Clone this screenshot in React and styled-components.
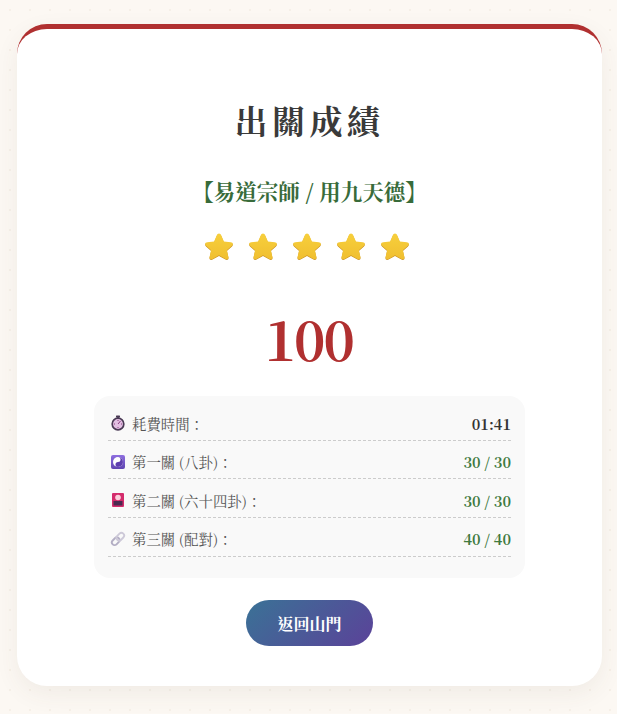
import React from "react";
import styled, { createGlobalStyle } from "styled-components";

const SERIF = `"Noto Serif CJK TC", "Noto Serif TC", "Liberation Serif", "Noto Sans CJK TC", serif`;

const Global = createGlobalStyle`
  html, body { margin: 0; padding: 0; }
  body {
    min-height: 714px;
    background-color: #fcf8f3;
    background-image: radial-gradient(#f6f0e8 1px, transparent 1px);
    background-size: 20px 20px;
    font-family: ${SERIF};
    overflow: hidden;
  }
`;

const Page = styled.div`
  padding: 24px 15px 28px 17px;
`;

const Card = styled.section`
  box-sizing: border-box;
  height: 662px;
  background: #fff;
  border-radius: 30px;
  border-top: 5px solid #b03030;
  box-shadow: 0 8px 24px rgba(90, 70, 50, 0.07);
  padding-top: 67px;
  display: flex;
  flex-direction: column;
  align-items: center;
`;

const Title = styled.h1`
  margin: 0;
  font-size: 33px;
  line-height: 48px;
  font-weight: 700;
  letter-spacing: 4.5px;
  color: #3a3a3a;
`;

const Rank = styled.h2`
  margin: 31px 0 0;
  font-size: 21.5px;
  line-height: 32px;
  font-weight: 700;
  color: #386b3a;
`;

const Stars = styled.div`
  margin: 24px 6px 0 0;
  display: flex;
  gap: 14px;
  height: 32px;
`;

const Score = styled.div`
  margin: 39px 2px 0 0;
  font-size: 54px;
  line-height: 72px;
  font-weight: 700;
  font-feature-settings: "pnum", "pwid";
  letter-spacing: -2.5px;
  color: #b03030;
`;

const Stats = styled.div`
  box-sizing: border-box;
  margin-top: 22px;
  width: 431px;
  height: 182px;
  padding: 6.300px 14px 0;
  background: #f9f9f9;
  border-radius: 16px;
`;

const Row = styled.div`
  height: 38.600px;
  box-sizing: border-box;
  padding-top: 4px;
  display: flex;
  align-items: center;
  justify-content: space-between;
  border-bottom: 1px dashed #ccc;
  font-size: 14.4px;
`;

const Label = styled.span`
  display: flex;
  align-items: center;
  gap: 6px;
  margin-left: 2px;
  color: #555;
`;

const Value = styled.span`
  font-size: 14.600px;
  font-weight: 700;
  font-feature-settings: "pnum", "pwid";
  color: ${(p) => (p.$ok ? "#3f7a3f" : "#333")};
`;

const Button = styled.button`
  margin-top: 22px;
  width: 127px;
  height: 46px;
  border: none;
  border-radius: 23px;
  background: linear-gradient(135deg, #3a7296, #5b4299);
  color: #fff;
  font-family: inherit;
  font-size: 16px;
  font-weight: 700;
`;

const STAR_PATH =
  "M15 2.500c1 0 1.700.7 2.200 1.800l2.700 6.300 6.800.7c2.200.2 2.900 2 1.300 3.400l-5.100 4.500 1.500 6.700c.5 2-1.200 3-3 2l-6.400-3.600-6.400 3.600c-1.800 1-3.500 0-3-2l1.500-6.700-5.100-4.500c-1.600-1.400-.9-3.200 1.300-3.400l6.800-.7 2.700-6.300C13.300 3.200 14 2.500 15 2.500z";

const Star = () => (
  <svg width="30" height="30" viewBox="0 0 30 30">
    <defs>
      <linearGradient id="st" x1="0" y1="0" x2="0" y2="1">
        <stop offset="0" stopColor="#f7cf3c" />
        <stop offset="1" stopColor="#f0bf30" />
      </linearGradient>
    </defs>
    <path d={STAR_PATH} fill="#c98f1e" transform="translate(0 .7)" />
    <path d={STAR_PATH} fill="url(#st)" />
  </svg>
);

const Timer = () => (
  <svg width="16" height="16" viewBox="0 0 16 16">
    <rect x="6" y="0.500" width="4" height="2" rx="0.6" fill="#4a3a55" />
    <rect x="7.200" y="2" width="1.600" height="2" fill="#4a3a55" />
    <circle cx="8" cy="9" r="5.800" fill="#e2bfe2" stroke="#4a3a55" strokeWidth="1.700" />
    <path d="M8 9L10.500 6M8 5v1M8 12v1M4 9h1M11 9h1" stroke="#8a3a80" strokeWidth="1" />
  </svg>
);

const YinYang = () => (
  <svg width="16" height="16" viewBox="0 0 16 16">
    <defs>
      <linearGradient id="yy" x1="0" y1="0" x2="0" y2="1">
        <stop offset="0" stopColor="#8e6ee0" />
        <stop offset="1" stopColor="#5f45b0" />
      </linearGradient>
    </defs>
    <rect x="1" y="1" width="14" height="14" rx="2" fill="url(#yy)" />
    <circle cx="8" cy="8" r="5" fill="#fff" />
    <path d="M8 3a5 5 0 0 1 0 10a2.500 2.500 0 0 1 0-5a2.500 2.500 0 0 0 0-5z" fill="#5e3fae" />
    <circle cx="8" cy="5.500" r="0.800" fill="#fff" />
    <circle cx="8" cy="10.500" r="0.800" fill="#5e3fae" />
  </svg>
);

const Card64 = () => (
  <svg width="16" height="16" viewBox="0 0 16 16">
    <rect x="2" y="1" width="12" height="14" rx="1" fill="#d42c6c" />
    <circle cx="8" cy="5.500" r="2.800" fill="#fbd0dc" />
    <rect x="3.500" y="9" width="9" height="4.500" fill="#4a2a50" />
  </svg>
);

const Chain = () => (
  <svg width="16" height="16" viewBox="0 0 16 16" fill="none">
    <g transform="rotate(-45 8 8)" strokeWidth="1.900">
      <rect x="0.500" y="5.300" width="8.500" height="5.400" rx="2.700" stroke="#b3aec4" />
      <rect x="7" y="5.300" width="8.500" height="5.400" rx="2.700" stroke="#cdc9d8" />
    </g>
  </svg>
);

const rows = [
  { icon: <Timer />, label: "耗費時間：", value: "01:41" },
  { icon: <YinYang />, label: "第一關 (八卦)：", value: "30 / 30", ok: true },
  { icon: <Card64 />, label: "第二關 (六十四卦)：", value: "30 / 30", ok: true },
  { icon: <Chain />, label: "第三關 (配對)：", value: "40 / 40", ok: true },
];

export default function App() {
  return (
    <Page>
      <Global />
      <Card>
        <Title>出關成績</Title>
        <Rank>【易道宗師 / 用九天德】</Rank>
        <Stars>
          {[0, 1, 2, 3, 4].map((i) => (
            <Star key={i} />
          ))}
        </Stars>
        <Score>100</Score>
        <Stats>
          {rows.map((r) => (
            <Row key={r.label}>
              <Label>
                {r.icon}
                {r.label}
              </Label>
              <Value $ok={r.ok}>{r.value}</Value>
            </Row>
          ))}
        </Stats>
        <Button>返回山門</Button>
      </Card>
    </Page>
  );
}
